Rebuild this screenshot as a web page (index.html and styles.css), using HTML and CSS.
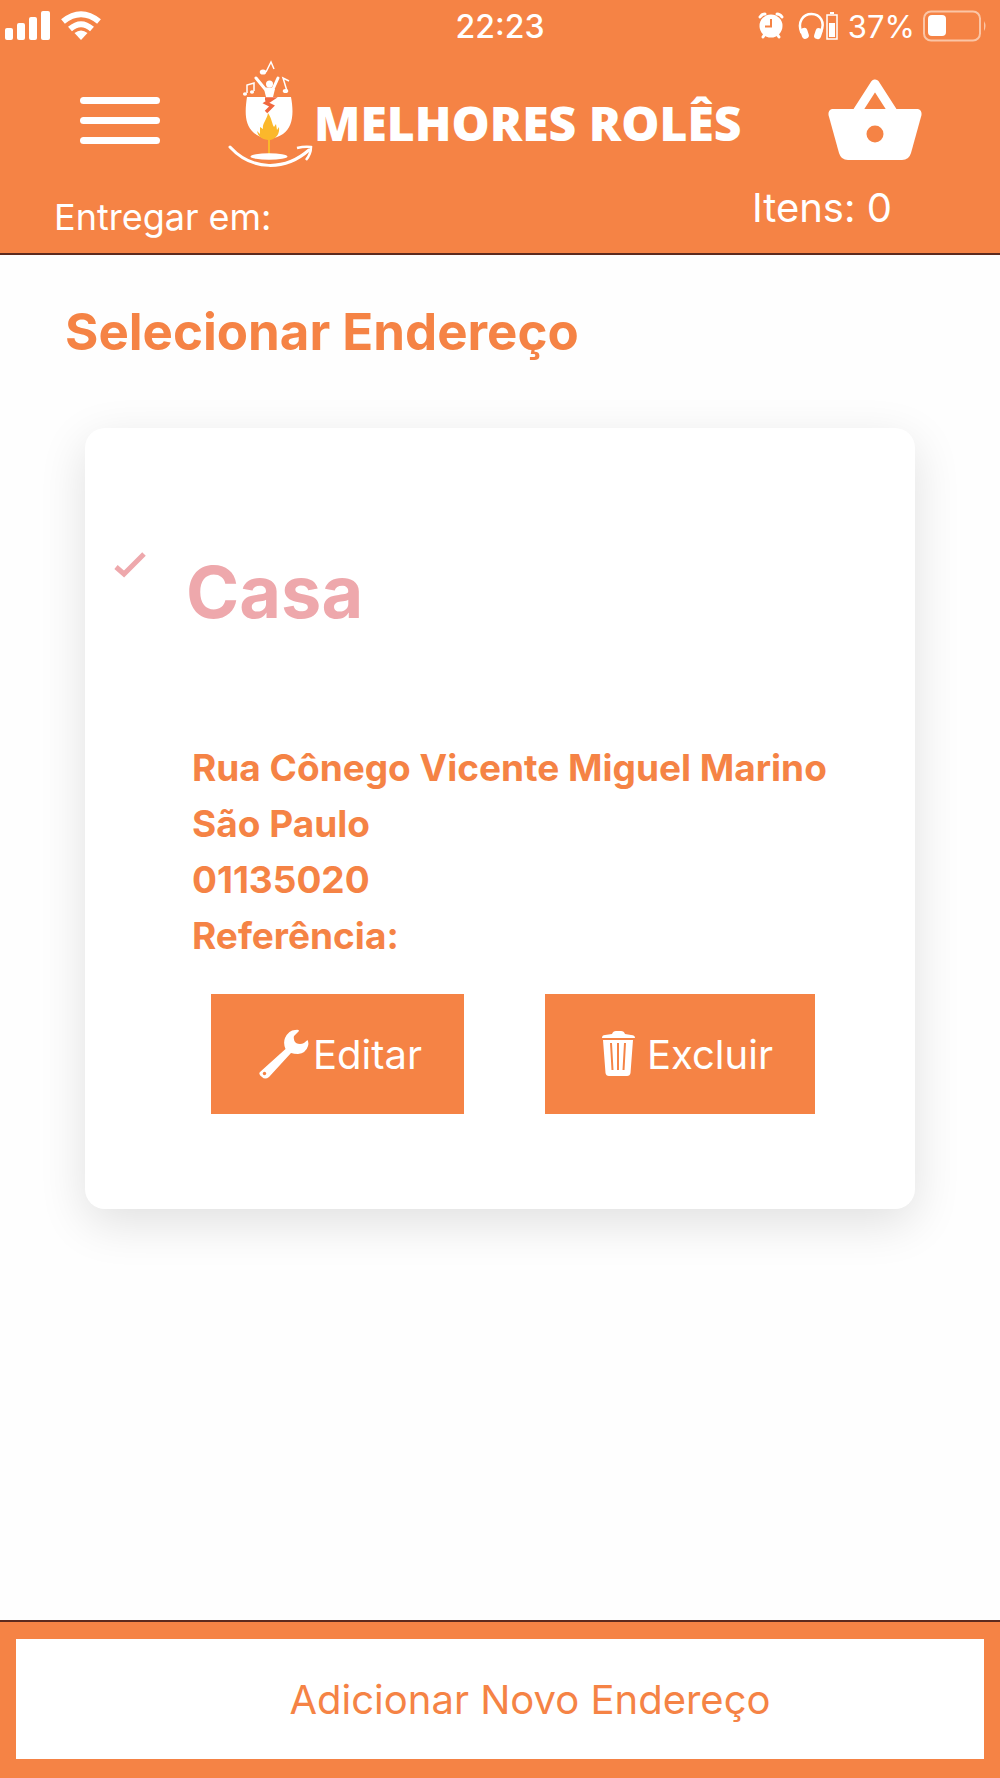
FILE: index.html
```html
<!DOCTYPE html>
<html lang="pt-br">
    <head>
        <meta charset="utf-8">
        <meta name="viewport" content="width=device-width, initial-scale=1">
        <title>Melhores Rolês</title>
        <link rel="stylesheet" href="styles.css">
    </head>
    <body>
        <header class="topo">
            <div class="status">
                <div class="status-lado">
                    <svg width="46" height="30" viewBox="0 0 46 30" fill="#fff">
                        <rect x="0" y="17" width="8" height="12" rx="2"/>
                        <rect x="12" y="12" width="8" height="17" rx="2"/>
                        <rect x="24" y="6" width="8" height="23" rx="2"/>
                        <rect x="36" y="0" width="9" height="29" rx="2"/>
                    </svg>
                    <svg width="40" height="30" viewBox="0 0 40 30" fill="none" stroke="#fff" stroke-width="6">
                        <path d="M2 10.500Q20 -4 38 10.500"/>
                        <path d="M9 18Q20 8.500 31 18"/>
                        <path d="M13.500 22Q20 17 26.500 22L20 29Z" fill="#fff" stroke="none"/>
                    </svg>
                </div>
                <span class="hora">22:23</span>
                <div class="status-lado status-direita">
                    <svg width="26" height="28" viewBox="0 0 26 28">
                        <g stroke="#fff" stroke-width="3" stroke-linecap="round" fill="none">
                            <path d="M2 5Q4 2 7 2M24 5Q22 2 19 2M5 25L7 22M21 25L19 22"/>
                        </g>
                        <circle cx="13" cy="14" r="11.500" fill="#fff"/>
                        <path d="M13 7V14.500H7" fill="none" stroke="#f58345" stroke-width="2"/>
                    </svg>
                    <svg class="fone" width="42" height="30" viewBox="0 0 42 30">
                        <path d="M3.500 22C-1 11 5 3 13.500 3S28 11 22.500 22" fill="none" stroke="#fff" stroke-width="2.500"/>
                        <rect x="3" y="17" width="7" height="11" rx="3" transform="rotate(-18 6 22)" fill="#fff"/>
                        <rect x="17" y="17" width="7" height="11" rx="3" transform="rotate(18 20 22)" fill="#fff"/>
                        <rect x="29" y="4" width="10" height="24" fill="none" stroke="#fff" stroke-width="1.500"/>
                        <path d="M32 1H36V3H32ZM31 12H37V26H31Z" fill="#fff"/>
                    </svg>
                    <span class="carga">37%</span>
                    <svg width="64" height="32" viewBox="0 0 64 32">
                        <rect x="1" y="1.500" width="56" height="29" rx="7" fill="none" stroke="#fbc5a5" stroke-width="2"/>
                        <rect x="5" y="5" width="18" height="21" rx="4" fill="#fff"/>
                        <path d="M61 11Q64 16 61 21Z" fill="#fbc5a5"/>
                    </svg>
                </div>
            </div>

            <div class="menu">
                <button class="botao-menu" type="button" aria-label="Menu">
                    <svg width="80" height="48" viewBox="0 0 80 48" fill="#fff">
                        <rect y="1" width="80" height="7" rx="3.500"/>
                        <rect y="21" width="80" height="7" rx="3.500"/>
                        <rect y="41" width="80" height="7" rx="3.500"/>
                    </svg>
                </button>
                <a class="logo" href="#">
                    <svg width="86" height="110" viewBox="228 59 86 110">
                        <!-- taca -->
                        <path d="M247 97H291C294 113 293 127 283 134Q277 138 269 138.500Q260 138 254 133C244 125 245 110 247 97Z" fill="#fff"/>
                        <path d="M265 99H272L266 103L272 106L266 112" fill="none" stroke="#f0683f" stroke-width="3.500"/>
                        <!-- fogo -->
                        <path d="M268 113C272 119 272 124 274 127L276 124L277 130L279 127C280 134 276 139 270 140V154H268V140C261 139 258 136 257 131L260 134L260 127L263 129C262 123 267 120 268 113Z" fill="#fbb82b"/>
                        <ellipse cx="269" cy="156.500" rx="18.500" ry="3.300" fill="#fff"/>
                        <!-- pessoa -->
                        <circle cx="269.500" cy="84" r="3.500" fill="#fff"/>
                        <path d="M256 78L265 89H273L278 78" fill="none" stroke="#fff" stroke-width="3" stroke-linecap="round"/>
                        <path d="M264 89H275L273 97H266Z" fill="#fff"/>
                        <!-- notas -->
                        <g fill="#fff" stroke="#fff" stroke-width="1.500">
                            <ellipse cx="263" cy="72" rx="2.500" ry="1.800"/>
                            <path d="M266 72L271 62L274 69" fill="none"/>
                            <ellipse cx="245" cy="94" rx="1.300" ry="1"/>
                            <ellipse cx="252" cy="92" rx="1.300" ry="1"/>
                            <path d="M247 93V85L254 83V91" fill="none"/>
                            <ellipse cx="285.500" cy="91" rx="2" ry="1.300"/>
                            <path d="M287 91L283 78L289 81" fill="none"/>
                        </g>
                        <!-- seta -->
                        <path d="M230 147C252 171 285 171 309 150" fill="none" stroke="#fff" stroke-width="3" stroke-linecap="round"/>
                        <path d="M297 148Q305 146 311 147Q311 154 306 160" fill="none" stroke="#fff" stroke-width="2.500"/>
                    </svg>
                    <span>MELHORES ROLÊS</span>
                </a>
                <a class="cesta" href="#" aria-label="Cesta">
                    <svg width="94" height="82" viewBox="0 0 94 82">
                        <path d="M29 33L47 5L65 33" fill="none" stroke="#fff" stroke-width="9" stroke-linejoin="round"/>
                        <path d="M4 30H90Q94 31 93.500 36L83 74Q81 81 74 81H20Q13 81 11 74L0.500 36Q0 31 4 30Z" fill="#fff"/>
                        <circle cx="47" cy="55" r="8.500" fill="#f58345"/>
                    </svg>
                </a>
            </div>

            <div class="entrega">
                <span class="entregar">Entregar em:</span>
                <span class="itens">Itens: 0</span>
            </div>
        </header>

        <main class="conteudo">
            <h1>Selecionar Endereço</h1>
            <section class="card">
                <svg class="check" width="32" height="26" viewBox="0 0 32 26" fill="none" stroke="#eea8ac" stroke-width="5">
                    <path d="M2 15L10 22L30 2"/>
                </svg>
                <div class="endereco">
                    <h2>Casa</h2>
                    <p>
                        Rua Cônego Vicente Miguel Marino<br>
                        São Paulo<br>
                        01135020<br>
                        Referência:
                    </p>
                    <div class="acoes">
                        <button type="button">
                            <svg width="50" height="50" viewBox="0 0 50 50">
                                <path d="M40 2L35 7Q34 11 37 14Q41 16 45 14L48.500 11Q50 14 49 17Q47 24 39 25Q35 25 32 24L10 48Q6 51 3 48Q-1 45 1 43L26.500 20Q24 14 26 9Q30 1 36 1Q40 0 40 2Z" fill="#fff"/>
                                <circle cx="5.500" cy="44.500" r="1.700" fill="#f58345"/>
                            </svg>
                            Editar
                        </button>
                        <button type="button">
                            <svg width="50" height="50" viewBox="0 0 50 50">
                                <path d="M9 9Q9 6 12 6L19 5Q20 2 23 2H28Q31 2 32 5L38 6Q42 6 42 9ZM10 11H40L37.500 44Q37 47 34 47H16Q13 47 12.500 44Z" fill="#fff"/>
                                <path d="M18 14L19.500 41M25 14V41M32 14L30.500 41" stroke="#f58345" stroke-width="2"/>
                            </svg>
                            Excluir
                        </button>
                    </div>
                </div>
            </section>
        </main>

        <footer class="rodape">
            <button type="button">Adicionar Novo Endereço</button>
        </footer>
    </body>
</html>
```
FILE: styles.css
```css
*{
    box-sizing: border-box;
}

body{
    margin: 0;
    min-height: 100vh;
    display: flex;
    flex-direction: column;
    background-color: #fefefe;
    color: #f58345;
    font-family: Inter, "Liberation Sans", sans-serif;
}

h1, h2, p{
    margin: 0;
}

svg{
    display: block;
    flex: none;
}

button{
    border: 0;
    padding: 0;
    font-family: inherit;
    font-size: 40px;
    cursor: pointer;
}

.topo{
    background-color: #f58345;
    border-bottom: 2px solid #5c2a1e;
    color: #fff;
}

.status{
    display: grid;
    grid-template-columns: 1fr auto 1fr;
    align-items: center;
    height: 52px;
    padding: 0 5px;
}

.status-lado{
    display: flex;
    align-items: center;
    gap: 10px;
}

.status-direita{
    justify-content: flex-end;
    gap: 8px;
    padding-right: 8px;
}

.hora{
    font-size: 32px;
    font-weight: 500;
}

.carga{
    font-size: 31px;
}

.fone{
    margin-left: 6px;
}

.menu{
    display: flex;
    align-items: center;
    height: 136px;
    padding: 0 78px 0 80px;
}

.botao-menu{
    background: none;
}

.logo{
    display: flex;
    align-items: center;
    margin-left: 68px;
    color: #fff;
    font-family: "Open Sans", sans-serif;
    font-size: 48px;
    font-weight: 800;
    text-decoration: none;
    white-space: nowrap;
}

.logo svg{
    margin-bottom: 12px;
}

.logo span{
    padding-top: 4px;
}

.cesta{
    margin-left: auto;
}

.entrega{
    display: flex;
    justify-content: space-between;
    height: 65px;
    padding: 0 108px 0 54px;
    line-height: 40px;
}

.entregar{
    padding-top: 9px;
    font-size: 36px;
}

.itens{
    font-size: 40px;
}

.conteudo{
    flex: 1;
    padding: 45px 85px 64px;
}

h1{
    margin: 0 -20px 64px;
    font-size: 51px;
    line-height: 64px;
    font-weight: 700;
}

.card{
    display: flex;
    align-items: flex-start;
    padding: 120px 29px 95px;
    background-color: #fff;
    border-radius: 20px;
    box-shadow: 0 14px 48px rgba(0, 0, 0, 0.12);
}

.check{
    margin: 4px 40px 0 0;
}

.endereco{
    flex: 1;
}

h2{
    color: #eea8ac;
    font-size: 72px;
    line-height: 88px;
}

.endereco p{
    margin: 104px 0 30px 6px;
    font-size: 37px;
    line-height: 56px;
    font-weight: 700;
}

.acoes{
    display: flex;
    gap: 81px;
    margin-left: 25px;
}

.acoes button{
    display: flex;
    align-items: center;
    gap: 4px;
    height: 120px;
    padding: 0 42px 0 48px;
    background-color: #f58345;
    color: #fff;
}

.rodape{
    padding: 17px 16px 19px;
    background-color: #f58345;
    border-top: 2px solid #5c2a1e;
}

.rodape button{
    width: 100%;
    height: 120px;
    padding-left: 60px;
    background-color: #fff;
    color: #f58345;
}
```
